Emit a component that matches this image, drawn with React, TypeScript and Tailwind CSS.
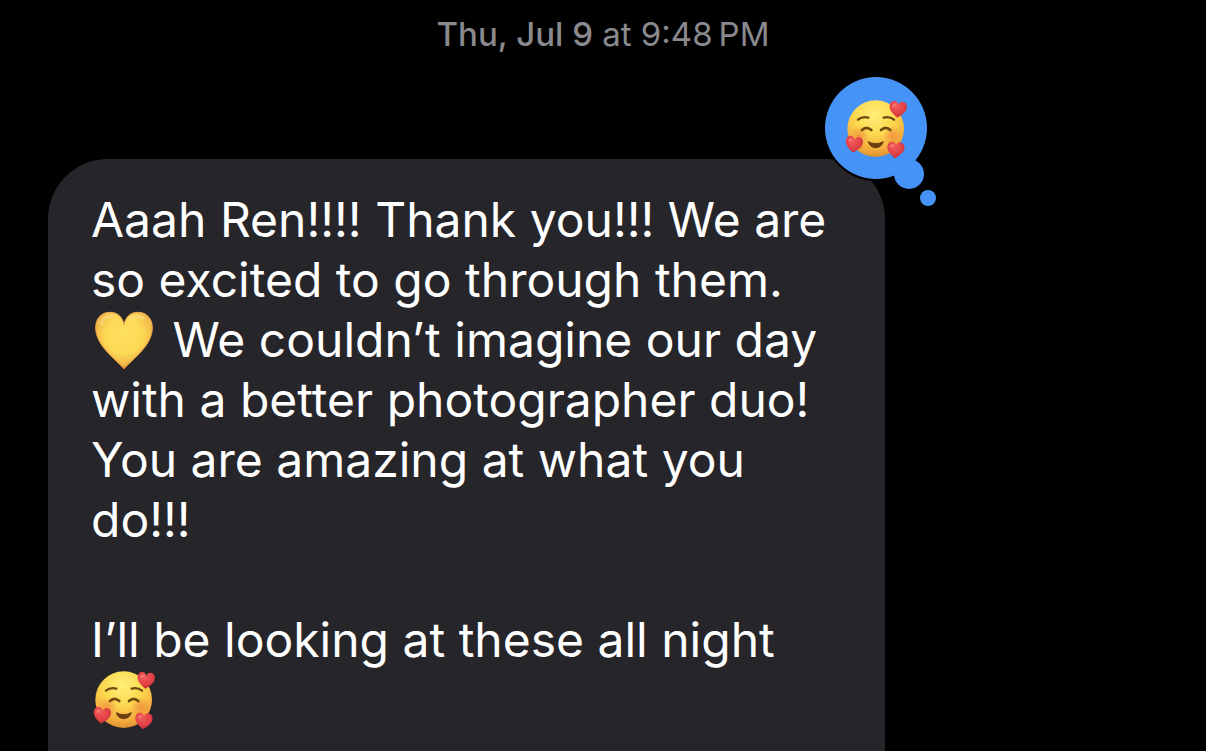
import { useId } from "react";

const HEART =
  "M0 25 C-9 18 -26 7 -26 -8 C-26 -18 -20 -24 -12 -24 C-6 -24 -2 -20 0 -14 C2 -20 6 -24 12 -24 C20 -24 26 -18 26 -8 C26 7 9 18 0 25 Z";

function LovedFace({ className }: { className: string }) {
  const id = useId();
  const face = `${id}face`;
  const heart = `${id}heart`;
  const cheek = `${id}cheek`;
  return (
    <svg className={className} viewBox="33 28 192 180" role="img" aria-label="Smiling face with hearts">
      <defs>
        <radialGradient id={face} cx="0.48" cy="0.25" r="0.78">
          <stop offset="0" stopColor="#fff07a" />
          <stop offset="0.45" stopColor="#fcd84f" />
          <stop offset="0.8" stopColor="#f3ac3d" />
          <stop offset="1" stopColor="#d98a2c" />
        </radialGradient>
        <radialGradient id={cheek}>
          <stop offset="0" stopColor="#f0743a" stopOpacity="0.55" />
          <stop offset="1" stopColor="#f0743a" stopOpacity="0" />
        </radialGradient>
        <radialGradient id={heart} cx="0.4" cy="0.3" r="0.8">
          <stop offset="0" stopColor="#f25a57" />
          <stop offset="0.6" stopColor="#e04045" />
          <stop offset="1" stopColor="#b8242d" />
        </radialGradient>
      </defs>
      <circle cx="131" cy="117" r="85" fill={`url(#${face})`} />
      <circle cx="82" cy="138" r="30" fill={`url(#${cheek})`} />
      <circle cx="182" cy="138" r="30" fill={`url(#${cheek})`} />
      <g fill="none" stroke="#6f4a10" strokeLinecap="round">
        <path d="M78 90 Q91 79 109 84" strokeWidth="7" />
        <path d="M155 84 Q172 79 186 90" strokeWidth="7" />
        <path d="M90 121 Q103 108 118 121" strokeWidth="8" />
        <path d="M147 121 Q161 108 175 121" strokeWidth="8" />
      </g>
      <path
        d="M109 156 Q131 168 154 156 Q149 173 131 174 Q113 173 109 156 Z"
        fill="#6b3f12"
        stroke="#6b3f12"
        strokeWidth="3"
        strokeLinejoin="round"
      />
      <g fill={`url(#${heart})`}>
        <path d={HEART} transform="translate(198 59) rotate(5)" />
        <path d={HEART} transform="translate(66 164) rotate(8)" />
        <path d={HEART} transform="translate(191 181) rotate(5)" />
      </g>
      <g fill="#ffaaa0" opacity="0.5">
        <ellipse cx="187" cy="47" rx="7" ry="4" transform="rotate(-30 187 47)" />
        <ellipse cx="55" cy="151" rx="7" ry="4" transform="rotate(-30 55 151)" />
        <ellipse cx="180" cy="168" rx="7" ry="4" transform="rotate(-30 180 168)" />
      </g>
    </svg>
  );
}

function YellowHeart({ className }: { className: string }) {
  const id = useId();
  const fill = `${id}fill`;
  const edge = `${id}edge`;
  return (
    <svg className={className} viewBox="33 28 192 180" role="img" aria-label="Yellow heart">
      <defs>
        <radialGradient id={fill} cx="0.5" cy="0.4" r="0.65">
          <stop offset="0" stopColor="#ffe062" />
          <stop offset="0.5" stopColor="#fcd955" />
          <stop offset="0.8" stopColor="#f2b648" />
          <stop offset="1" stopColor="#dc8936" />
        </radialGradient>
        <linearGradient id={edge} x1="0" y1="0" x2="0" y2="1">
          <stop offset="0" stopColor="#eab057" />
          <stop offset="1" stopColor="#d8872f" />
        </linearGradient>
      </defs>
      <path
        d="M132 205 C114 181 47 138 47 81 C47 53 65 35 90 35 C112 35 127 48 132 72 C137 48 152 35 174 35 C199 35 217 53 217 81 C217 138 150 181 132 205 Z"
        fill={`url(#${fill})`}
        stroke={`url(#${edge})`}
        strokeWidth="3"
      />
      <path d="M64 68 C69 53 80 46 96 47" fill="none" stroke="#ffeeb0" strokeWidth="12" strokeLinecap="round" opacity="0.3" />
      <path d="M152 58 C160 47 176 44 189 51" fill="none" stroke="#ffeeb0" strokeWidth="12" strokeLinecap="round" opacity="0.3" />
    </svg>
  );
}

function Reaction() {
  return (
    <div className="absolute -top-21 -right-14 h-34 w-29">
      <svg className="absolute inset-0 h-full w-full" viewBox="0 0 116 136" aria-hidden="true">
        <g fill="#000000">
          <circle cx="51" cy="53" r="53" />
          <circle cx="84" cy="99" r="17" />
        </g>
        <g fill="#4693f8">
          <circle cx="51" cy="53" r="51" />
          <circle cx="84" cy="99" r="15" />
          <circle cx="103" cy="123" r="8" />
        </g>
      </svg>
      <LovedFace className="absolute top-6 left-[18px] h-[60px] w-16" />
    </div>
  );
}

export default function App() {
  return (
    <main className="flex min-h-screen flex-col bg-black font-['Inter','Noto_Sans',sans-serif]">
      <time className="pt-[13px] text-center text-[33px] leading-[42px] text-[#8a8a8e]">
        <span className="font-medium">Thu, Jul 9</span> at 9:48&#8239;PM
      </time>
      <article className="relative mt-[104px] mr-12 ml-12 w-full max-w-[837px] flex-1 rounded-t-[60px] bg-[#26252a] px-[43px] pt-[31px] text-5xl leading-[60px] text-white">
        <Reaction />
        <p>
          Aaah Ren!!!! Thank you!!! We are so excited to go through them.{" "}
          <YellowHeart className="mr-1 inline-block h-[60px] w-16 align-top" /> We couldn’t imagine our day with a better
          photographer duo! You are amazing at what you do!!!
        </p>
        <p className="mt-[60px]">
          I’ll be looking at these all night <LovedFace className="inline-block h-[60px] w-16 align-top" />
        </p>
      </article>
    </main>
  );
}
